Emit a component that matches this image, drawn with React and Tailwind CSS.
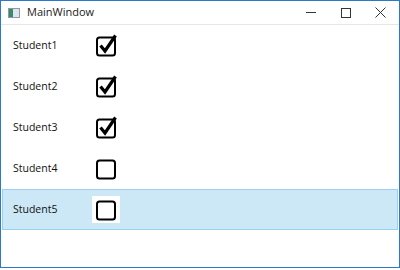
import React from "react";

const students = [
  { name: "Student1", checked: true },
  { name: "Student2", checked: true },
  { name: "Student3", checked: true },
  { name: "Student4", checked: false },
  { name: "Student5", checked: false, selected: true },
];

const CheckBox = ({ checked }) => (
  <svg width="23" height="23" viewBox="0 0 23 23">
    <rect x="2" y="3.5" width="18" height="18" rx="2.5" fill="white" stroke="black" strokeWidth="2" />
    {checked && (
      <path d="M5.5 11.5 L10 17 L20.5 1.5" fill="none" stroke="black" strokeWidth="3.2" strokeLinejoin="miter" />
    )}
  </svg>
);

const App = () => {
  return (
    <div className="w-[400px] h-[270px] bg-white" style={{ fontFamily: '"Open Sans", "Noto Sans", sans-serif' }}>
      <div className="w-[400px] h-[268px] flex flex-col border border-[#2b79c9] bg-white">
        <div className="h-[24px] flex items-center border-b border-[#e6e6e6] text-[11px] text-[#1a1a1a]">
          <div className="ml-[7px] mr-[7px] w-[12px] h-[10px] border border-[#8c9aa8] bg-[#dde6ee] flex">
            <div className="w-[4px] bg-[#3d8a6a]"></div>
          </div>
          <span>MainWindow</span>
          <div className="ml-auto flex items-center h-full pr-px">
            <div className="w-[35px] flex justify-center">
              <div className="w-[10px] h-px bg-[#333]"></div>
            </div>
            <div className="w-[35px] flex justify-center">
              <div className="w-[10px] h-[10px] border border-[#333]"></div>
            </div>
            <div className="w-[35px] flex justify-center">
              <svg width="11" height="11" viewBox="0 0 11 11">
                <path d="M0.5 0.5 L10.5 10.5 M10.5 0.5 L0.5 10.5" stroke="#333" strokeWidth="1" />
              </svg>
            </div>
          </div>
        </div>
        <div className="flex flex-col px-px">
          {students.map((s) => (
            <div
              key={s.name}
              className={`h-[41px] flex items-center border ${
                s.selected ? "bg-[#cce8f6] border-[#99d1ef]" : "border-transparent"
              }`}
            >
              <span className="w-[89px] pl-[10px] text-[10.5px] text-[#111]">{s.name}</span>
              <div className={`flex items-center justify-center w-[28px] h-[27px] ${s.selected ? "bg-white" : ""}`}>
                <CheckBox checked={s.checked} />
              </div>
            </div>
          ))}
        </div>
      </div>
    </div>
  );
};

export default App;
